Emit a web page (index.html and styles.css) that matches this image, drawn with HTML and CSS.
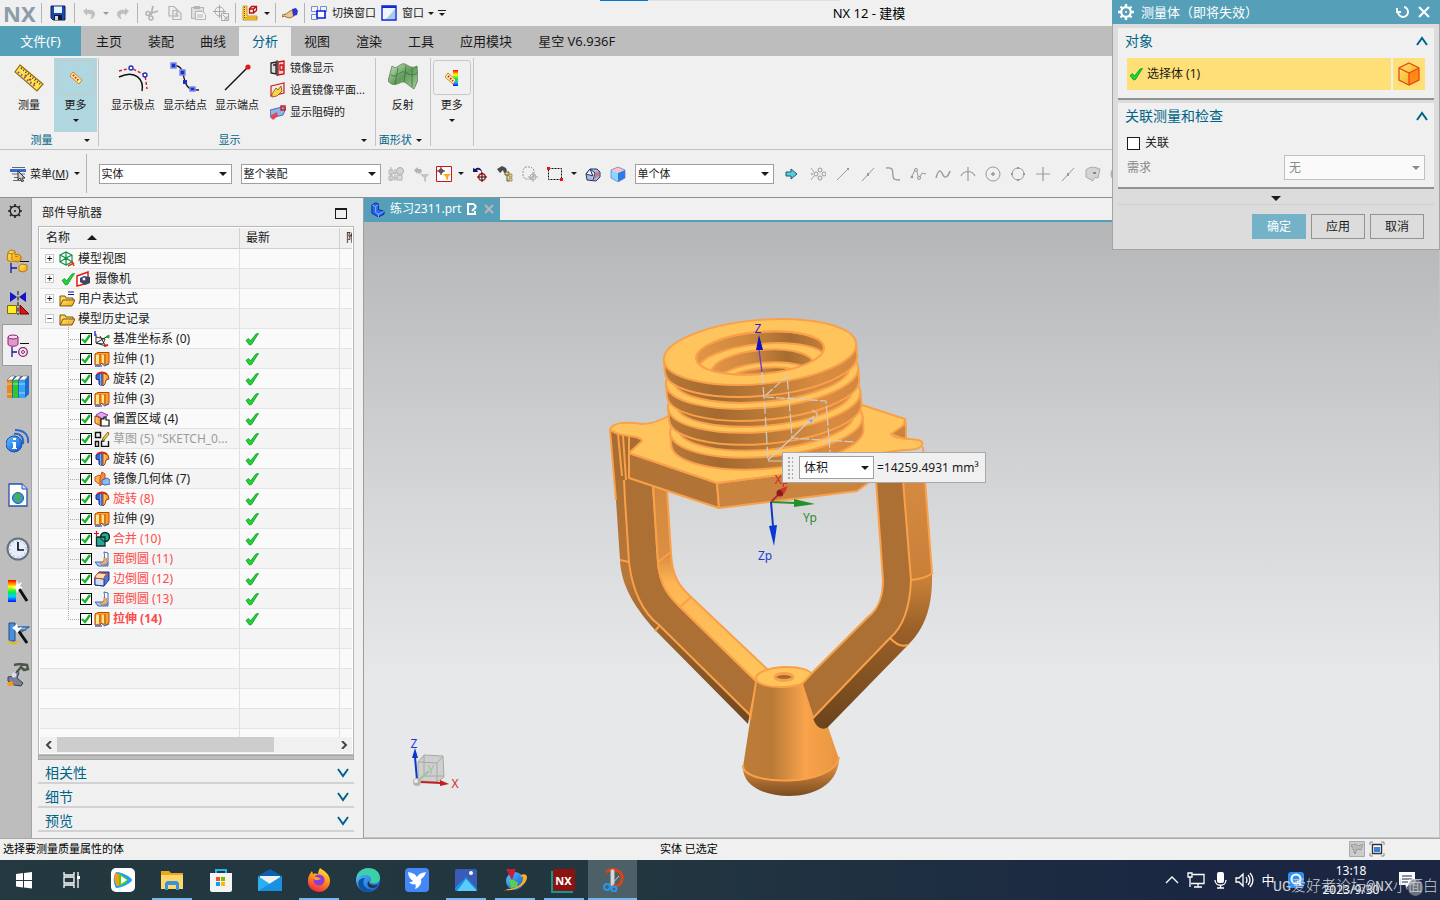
FILE: index.html
```html
<!DOCTYPE html>
<html lang="zh-CN">
<head>
    <meta charset="UTF-8">
    <meta name="viewport" content="width=device-width, initial-scale=1.0">
    <title>NX 12 - 建模</title>
    <link rel="stylesheet" href="styles.css">
</head>
<body>
    <!-- icon sprite -->
    <svg class="sprite" aria-hidden="true">
        <defs>
            <linearGradient id="gold" x1="0" y1="0" x2="1" y2="1"><stop offset="0" stop-color="#ffe96b"/><stop offset="1" stop-color="#f0a010"/></linearGradient>
            <linearGradient id="orange" x1="0" y1="0" x2="1" y2="0"><stop offset="0" stop-color="#ffe070"/><stop offset="1" stop-color="#ff7a10"/></linearGradient>
            <linearGradient id="blue" x1="0" y1="0" x2="1" y2="1"><stop offset="0" stop-color="#5ac8ff"/><stop offset="1" stop-color="#1050d0"/></linearGradient>
            <linearGradient id="green" x1="0" y1="0" x2="1" y2="1"><stop offset="0" stop-color="#cfe8c4"/><stop offset="0.5" stop-color="#5f9c58"/><stop offset="1" stop-color="#a9cfa0"/></linearGradient>
            <linearGradient id="rainbow" x1="0" y1="0" x2="0" y2="1"><stop offset="0" stop-color="#f00"/><stop offset="0.3" stop-color="#ff0"/><stop offset="0.55" stop-color="#0e4"/><stop offset="0.75" stop-color="#0cf"/><stop offset="1" stop-color="#11f"/></linearGradient>
            <linearGradient id="fire" x1="0.7" y1="0" x2="0.3" y2="1"><stop offset="0" stop-color="#ffe23a"/><stop offset="0.5" stop-color="#ff8a16"/><stop offset="1" stop-color="#f0204e"/></linearGradient>
        </defs>
        <symbol id="i-check" viewBox="0 0 14 14"><path d="M1 8.500 3.500 6.500 5.500 9 11 2 13.500 1.500 6.500 12.500 4.500 13Z" fill="#1fd43a" stroke="#0a9a1c" stroke-width=".8"/></symbol>
        <symbol id="i-save" viewBox="0 0 16 16"><path d="M1 1h14v14H3L1 13Z" fill="#1c49b0" stroke="#0c2060"/><path d="M4 1.500h8V8H4Z" fill="#e8f2ff"/><path d="M4 10h8v5H4Z" fill="#101830"/><path d="M5 11h3v4H5Z" fill="#d0d8e0"/></symbol>
        <symbol id="i-undo" viewBox="0 0 16 16"><path d="M2 6l4-3v2c5-1 8 1 8 4 0 3-3 5-5 5 2-2 3-6-3-5v2Z" fill="#c0c0c0"/></symbol>
        <symbol id="i-redo" viewBox="0 0 16 16"><path d="M14 6l-4-3v2C5 4 2 6 2 9c0 3 3 5 5 5-2-2-3-6 3-5v2Z" fill="#c0c0c0"/></symbol>
        <symbol id="i-cut" viewBox="0 0 16 16"><path d="M9 1 7 10M14 6 5 9" stroke="#b4b4b4" stroke-width="1.8"/><circle cx="4" cy="8.500" r="2" fill="none" stroke="#b4b4b4" stroke-width="1.500"/><circle cx="7" cy="13" r="2" fill="none" stroke="#b4b4b4" stroke-width="1.500"/></symbol>
        <symbol id="i-copy" viewBox="0 0 16 16"><path d="M2 1.500h5l3 3V11H2ZM6 5.500h5l3 3v6H6Z" fill="#eee" stroke="#b4b4b4" stroke-width="1.200"/><path d="M8 9h3M8 11h4" stroke="#b4b4b4"/></symbol>
        <symbol id="i-paste" viewBox="0 0 16 16"><path d="M1.500 2.500h12v11h-12Z" fill="#ddd" stroke="#b4b4b4"/><path d="M4 1h6v3H4Z" fill="#b4b4b4"/><path d="M5.500 6.500h7l3 3v5h-10Z" fill="#f4f4f4" stroke="#b4b4b4"/><path d="M7 10h6M7 12h6" stroke="#b4b4b4"/></symbol>
        <symbol id="i-target" viewBox="0 0 16 16"><circle cx="6.500" cy="6.500" r="4.500" fill="none" stroke="#a8a8a8"/><path d="M6.500 0v13M0 6.500h13" stroke="#a8a8a8"/><path d="M8.500 8.500h7v7h-7Z" fill="#f0f0f0" stroke="#a8a8a8"/><path d="M10 10l4 4M14 11v3h-3" stroke="#a8a8a8" fill="none"/></symbol>
        <symbol id="i-measure" viewBox="0 0 16 16"><path d="M1 1h4v10h10v4H1Z" fill="#ffe03a" stroke="#b08010" stroke-width=".8"/><path d="M2.500 2v11H15" stroke="#b0201c" stroke-dasharray="1 1" fill="none"/><path d="M7.500 4h4v4h-4ZM7.500 4l2-2.500h5v4L11.500 8M11.500 4l3-2.500" fill="none" stroke="#b81414" stroke-width="1.300"/></symbol>
        <symbol id="i-hand" viewBox="0 0 16 16"><path d="M0 10l4-1 4-3 5-1-1 6-4 2-4-1-1-1-3 1Z" fill="#eec98c" stroke="#8c5a20" stroke-width=".8"/><path d="M10 4l4-1 2 3-1 4-4 1Z" fill="#3038c8"/></symbol>
        <symbol id="i-windows" viewBox="0 0 16 16"><path d="M.5 1.500h6v5h-6ZM9.500 1.500h6v5h-6ZM.5 9.500h6v5h-6Z" fill="#eef4ff" stroke="#7a90b8"/><path d="M6 6h8v7H6Z" fill="#fff" stroke="#0a18f0" stroke-width="1.600"/></symbol>
        <symbol id="i-window" viewBox="0 0 16 16"><path d="M1 1h14v14H1Z" fill="#eef6fc" stroke="#1020d8" stroke-width="1.400"/><path d="M1 1h14v2H1Z" fill="#1028d8"/><path d="M14 4v10H5Z" fill="#a4cdec"/></symbol>
        <symbol id="i-ruler" viewBox="0 0 30 30"><path d="M6 3 29 22 23 29 1 10Z" fill="#ffe44c" stroke="#9a6a10" stroke-width="1.200"/><path d="M7 6 26 22" stroke="#334" stroke-width="2" stroke-dasharray="1 2"/><path d="M4 10 22 25" stroke="#4a58d0" stroke-width="2" stroke-dasharray="1.500 2.500"/><path d="M11 13l10 9" stroke="#e02818" stroke-width="2" stroke-dasharray="2 4"/></symbol>
        <symbol id="i-poles" viewBox="0 0 30 30"><path d="M1 15C18 7 26 18 24 29" fill="none" stroke="#111" stroke-width="1.400"/><path d="M1 9 13 6 27 13l2 14" fill="none" stroke="#cc1a2a" stroke-width="1.400" stroke-dasharray="3 2"/><circle cx="13" cy="6" r="2" fill="#fff" stroke="#1830b8" stroke-width="1.300"/><circle cx="27" cy="13" r="2" fill="#fff" stroke="#1830b8" stroke-width="1.300"/></symbol>
        <symbol id="i-knots" viewBox="0 0 30 30"><path d="M3 3c11 1 9 8 12 16 2 7 5 9 14 9" fill="none" stroke="#111" stroke-width="1.300"/><path d="M1 1h5v5H1ZM10 8h5v5h-5ZM20 25h5v4h-5Z" fill="#1830c8" stroke="#7c8ae8" stroke-width="1.500"/><path d="M13 18h4v4h-4Z" fill="#1830c8"/></symbol>
        <symbol id="i-ends" viewBox="0 0 30 30"><path d="M3 28 26 5" stroke="#111" stroke-width="1.500"/><circle cx="26" cy="5" r="2.600" fill="#e01818"/></symbol>
        <symbol id="i-mirror" viewBox="0 0 16 16"><path d="M1 3 6 2v12l-5-1ZM3 5h3" fill="#ddd" stroke="#222" stroke-width="1.300"/><path d="M8 2 14 1v13l-6 1Z" fill="#ffd0d0" stroke="#c01010" stroke-width="1.300"/><path d="M7 0v16" stroke="#222"/><path d="M10 5h3v5h-3Z" fill="none" stroke="#c01010" stroke-width="1.300"/></symbol>
        <symbol id="i-setmirror" viewBox="0 0 16 16"><path d="M1 4 14 1v10L1 14Z" fill="#f4e8e0" stroke="#c02020" stroke-width="1.200"/><path d="M2 12 6 6l2 2 3-4 1 5-5 5-5 1Z" fill="#ffd24a" stroke="#8a4a10" stroke-width=".8"/></symbol>
        <symbol id="i-obstacle" viewBox="0 0 16 16"><path d="M0 6 12 3l4 1-3 7-12 3Z" fill="#8fb4ea" stroke="#3a50a0" stroke-width=".8"/><path d="M0 12 7 8l1 4-5 4Z" fill="#e04858"/><path d="M11 2h4v4h-4Z" fill="none" stroke="#d01818" stroke-width="1.300"/></symbol>
        <symbol id="i-reflect" viewBox="0 0 30 26"><path d="M4 2c5 5 8-4 13-2 4 2 7 5 12 2l1 14-4 9C21 22 17 17 14 18 9 20 5 23 0 17Z" fill="url(#green)" stroke="#567c50" stroke-width=".8"/><path d="M3 11c6 4 9-5 14-3 4 3 8 4 12 1M10 4 7 20M18 2l-2 16M24 5l0 18" stroke="#3f6f3c" stroke-width=".8" fill="none"/></symbol>
        <symbol id="i-mini-ruler" viewBox="0 0 16 16"><path d="M5 2 14 10l-3 4L2 6Z" fill="#fff0a0" stroke="#c88a20"/><path d="m5 5 6 6" stroke="#d02020" stroke-width="2" stroke-dasharray="1.500 1.500"/></symbol>
        <symbol id="i-rainbow-ruler" viewBox="0 0 16 16"><path d="M9 0h5v16H9Z" fill="url(#rainbow)"/><path d="M4 3l8 7-3 4-8-7Z" fill="#fff2b0" stroke="#c88a20"/><path d="m4 6 5 5" stroke="#d02020" stroke-width="2" stroke-dasharray="1.500 1.500"/></symbol>
        <symbol id="i-menu" viewBox="0 0 16 16"><path d="M2 1.500h13M2 8h13M4 11.500h10M3 14.500h11" stroke="#666" stroke-width="1.200"/><path d="M0 3h16v3H0Z" fill="#3868d8"/><path d="M8 5v9l2-2 2 4 1.500-1-1.500-3h3Z" fill="#ccc" stroke="#222" stroke-width=".9"/></symbol>
        <symbol id="i-grayasm" viewBox="0 0 16 16"><path d="M1 4h4v4H1ZM1 10h4v4H1ZM7 3v12M5 7h4M5 12h4M3 1v14" fill="none" stroke="#b0b0b0"/><circle cx="12" cy="5" r="3.500" fill="#d4d4d4" stroke="#b0b0b0"/><path d="M9 9h5v5H9Z" fill="#ddd" stroke="#b0b0b0"/></symbol>
        <symbol id="i-grayfilter" viewBox="0 0 16 16"><path d="M1 4l4-3v2h3l1 3-3 2-2-2v2Z" fill="#b4b4b4"/><path d="M7 8h9l-3 4v4l-2-1v-3Z" fill="#c4c4c4"/></symbol>
        <symbol id="i-filter" viewBox="0 0 16 16"><path d="M.5.500h15v15H.5Z" fill="#fff" stroke="#d01020"/><circle cx="5" cy="5" r="2" fill="none" stroke="#a01818"/><path d="M5 1v8M1 5h8" stroke="#222"/><path d="M7 8h8l-3 3v3l-2-1v-2Z" fill="#ffae10"/></symbol>
        <symbol id="i-rotpt" viewBox="0 0 16 16"><path d="M1 6V2l2 1c4-3 7 0 7 4-1-3-3-4-5-3l1 2Z" fill="#15155e"/><circle cx="10" cy="11" r="3.300" fill="none" stroke="#d01818" stroke-width="1.400"/><path d="M10 6v10M5 11h10" stroke="#111"/></symbol>
        <symbol id="i-find" viewBox="0 0 16 16"><path d="M0 3 5 0l4 2 1 3-3 2-1-3-3 3Z" fill="#4a4a4a"/><path d="M8 6h4v3H8ZM10 9v6h2" fill="#ffe05a" stroke="#555"/><path d="M12 8h3v3h-3ZM12 12h3v3h-3Z" fill="#ffd23c" stroke="#777" stroke-width=".7"/></symbol>
        <symbol id="i-graysel" viewBox="0 0 16 16"><path d="M3 1h6l3 3v6l-3 3H3L1 10V4Z" fill="none" stroke="#999" stroke-dasharray="2 1"/><circle cx="11" cy="11" r="3" fill="none" stroke="#aaa"/><path d="M11 6v10M6 11h10" stroke="#aaa"/></symbol>
        <symbol id="i-rect" viewBox="0 0 16 16"><path d="M1.500 2.500h13v11h-13Z" fill="none" stroke="#111" stroke-dasharray="2 1"/><path d="M0 1h3v3H0ZM13 12h3v3h-3Z" fill="#e01818"/></symbol>
        <symbol id="i-box-red" viewBox="0 0 16 16"><path d="M1 8 5 3l7 0 3 3v5l-4 4-9-1Z" fill="#a8bcdc" stroke="#20386c"/><path d="M5 3l5 4-2 7M5 3 1 8l7 2Z" fill="#f0f4fc" stroke="#20386c"/><path d="M10 7l4-2v5l-5 3Z" fill="#e05050" opacity=".6"/></symbol>
        <symbol id="i-cube" viewBox="0 0 16 16"><path d="M1 4 8 1l7 3-7 3Z" fill="#ffc0c4"/><path d="M1 4l7 3v9l-7-4Z" fill="#8ed4ff"/><path d="M15 4 8 7v9l7-4Z" fill="#2c7ce8"/><path d="M1 4 8 1l7 3v8l-7 4-7-4Z" fill="none" stroke="#5a78c0" stroke-width=".7"/></symbol>
        <symbol id="i-go" viewBox="0 0 16 16"><path d="M3 6h5V3l6 5-6 5v-3H3Z" fill="#58cce0" stroke="#24586c"/></symbol>
        <symbol id="i-snap" viewBox="0 0 16 16"><path d="M1 2l3 4M1 14l3-4M1 7l2 1-2 1" fill="none" stroke="#aaa"/><circle cx="10" cy="4" r="2" fill="none" stroke="#999"/><circle cx="6" cy="8" r="2" fill="none" stroke="#999"/><circle cx="14" cy="8" r="2" fill="none" stroke="#999"/><circle cx="10" cy="12" r="2" fill="none" stroke="#999"/></symbol>
        <symbol id="i-line" viewBox="0 0 16 16"><path d="M2 14 14 2" stroke="#999"/><path d="M12 2h2v2h-2Z" fill="#999"/></symbol>
        <symbol id="i-mid" viewBox="0 0 16 16"><path d="M2 15 14 2" stroke="#999"/><path d="M7 7h2v3H7Z" fill="#999"/></symbol>
        <symbol id="i-curve" viewBox="0 0 16 16"><path d="M1 2c9-1 6 4 7 8 0 4 3 4 7 4" fill="none" stroke="#999" stroke-width="1.300"/></symbol>
        <symbol id="i-spline" viewBox="0 0 16 16"><path d="M1 12 6 2l3 11 3-6 4 1" fill="none" stroke="#999"/><circle cx="6" cy="4" r="1.500" fill="#eee" stroke="#999"/><circle cx="9" cy="12" r="1.500" fill="#eee" stroke="#999"/><circle cx="2" cy="11" r="1.300" fill="#999"/></symbol>
        <symbol id="i-wave" viewBox="0 0 16 16"><path d="M1 12C4 1 6 5 8 9s5 2 7-4" fill="none" stroke="#999" stroke-width="1.400"/></symbol>
        <symbol id="i-inter" viewBox="0 0 16 16"><path d="M8 1v14M1 10c3-6 11-6 14 0" fill="none" stroke="#999" stroke-width="1.200"/></symbol>
        <symbol id="i-center" viewBox="0 0 16 16"><circle cx="8" cy="8" r="7" fill="none" stroke="#999"/><path d="M6 8h4M8 6v4" stroke="#999" stroke-width="1.500"/></symbol>
        <symbol id="i-quad" viewBox="0 0 16 16"><circle cx="8" cy="8" r="6" fill="none" stroke="#999"/><path d="M7 1h2v2H7ZM7 13h2v2H7ZM1 7h2v2H1ZM13 7h2v2h-2Z" fill="#999"/></symbol>
        <symbol id="i-plus" viewBox="0 0 16 16"><path d="M8 1v14M1 8h14" stroke="#999" stroke-width="1.200"/></symbol>
        <symbol id="i-face" viewBox="0 0 16 16"><path d="M1 4c4-4 9-3 14-1l-2 9c-3-1-5 0-5 3l-7-4Z" fill="#d4d4d4" stroke="#aaa"/><path d="M8 6h3v2H8Z" fill="#888"/></symbol>
        <symbol id="i-gear" viewBox="0 0 16 16"><circle cx="8" cy="8" r="4.800" fill="none" stroke="currentColor" stroke-width="2.200"/><circle cx="8" cy="8" r="1" fill="currentColor"/><path d="M8 0v3M8 13v3M0 8h3M13 8h3M2.500 2.500l2 2M11.500 11.500l2 2M13.500 2.500l-2 2M4.500 11.500l-2 2" stroke="currentColor" stroke-width="2.400"/></symbol>
        <symbol id="i-thin-gear" viewBox="0 0 16 16"><circle cx="8" cy="8" r="4.800" fill="none" stroke="#222" stroke-width="1.400"/><circle cx="8" cy="8" r="1" fill="#222"/><path d="M8 1v2.500M8 12.500V15M1 8h2.500M12.500 8H15M3 3l1.500 1.500M11.500 11.500 13 13M13 3l-1.500 1.500M4.500 11.500 3 13" stroke="#222" stroke-width="1.600"/></symbol>
        <symbol id="i-assembly" viewBox="0 0 24 24"><path d="M2 3l3-2 4 1v4l3-1 3 2v4l-3 2-4-1-3 1-4-2Z" fill="url(#gold)" stroke="#b87808"/><path d="M2 4l4 1 3-2M6 5v6M9 8l3-1" fill="none" stroke="#b87808"/><path d="M14 12.500h9" stroke="#111"/><path d="M5 14v10M5 19h6" stroke="#1418a0" stroke-width="1.300"/><path d="M13 17l3-2 5 1v5l-3 2-5-1Z" fill="url(#gold)" stroke="#b87808"/></symbol>
        <symbol id="i-constraint" viewBox="0 0 24 24"><path d="M4 1l7 5-7 5ZM20 1l-7 5 7 5Z" fill="#1414c8"/><path d="M12 0v24" stroke="#111" stroke-dasharray="4 1.500"/><path d="M1.500 14.500h9v8h-9Z" fill="#ffee20" stroke="#7a6a10"/><path d="M14 14v9h9Z" fill="#e01010" stroke="#700"/></symbol>
        <symbol id="i-partnav" viewBox="0 0 24 24"><path d="M1 4v7c0 3 10 3 10 0V4" fill="#e498cc" stroke="#8c2070"/><ellipse cx="6" cy="4" rx="5" ry="2" fill="#fbd8f0" stroke="#8c2070"/><path d="M13 10.500h9" stroke="#111"/><path d="M5 14v10M5 19h5" stroke="#1418a0" stroke-width="1.300"/><circle cx="16" cy="19" r="4.300" fill="none" stroke="#8c2070" stroke-width="1.300"/><circle cx="16" cy="19" r="1.500" fill="none" stroke="#8c2070"/></symbol>
        <symbol id="i-books" viewBox="0 0 24 24"><path d="M1 5 5 1h18v18l-4 4H1Z" fill="#1c6cd0"/><path d="M1 5h5v18H1Z" fill="#e88820"/><path d="M7 5h5v18H7Z" fill="#30c828"/><path d="M13 5h6v18h-6Z" fill="#35a4f4"/><path d="M1 5l4-4h4L6 5ZM7 5l4-4h4l-3 4ZM13 5l4-4h5l-3 4Z" fill="#fff" stroke="#555" stroke-width=".5"/><path d="M1 9h5M7 9h5M13 9h6M13 18h6M1 19h5" stroke="#ffffff90"/></symbol>
        <symbol id="i-info" viewBox="0 0 24 24"><path d="M8 5c7-1 10 4 9 10M9 1c10 0 14 6 13 13" fill="none" stroke="#2c68c8" stroke-width="2"/><circle cx="8" cy="15" r="8" fill="url(#blue)" stroke="#1a4cb0"/><path d="M7 9h3v2H7ZM6 13h4v6h1v1H6v-1h1v-5H6Z" fill="#fff"/></symbol>
        <symbol id="i-web" viewBox="0 0 24 24"><path d="M3 1h13l5 5v17H3Z" fill="#fff" stroke="#2850b0" stroke-width="1.300"/><path d="M16 1v5h5" fill="#cfe0fa" stroke="#2850b0"/><circle cx="12" cy="15" r="5.500" fill="#3898d8" stroke="#1c6090"/><path d="M9 11l4-1 2 4-3 5-3-3Z" fill="#48b050"/></symbol>
        <symbol id="i-clock" viewBox="0 0 24 24"><circle cx="12" cy="12" r="10.500" fill="#e4eefc" stroke="#68707c" stroke-width="2"/><circle cx="12" cy="12" r="8" fill="none" stroke="#889" stroke-dasharray="1 3"/><path d="M12 5v8h6" fill="none" stroke="#111" stroke-width="1.700"/></symbol>
        <symbol id="i-rainbow" viewBox="0 0 24 24"><path d="M2 1h8v22H2Z" fill="url(#rainbow)"/><path d="M12 8 21 22" stroke="#111" stroke-width="3"/><path d="M11 1l1 4 4-2-2 4 3 2-4 1-2 4-1-4-4-1 4-2Z" fill="#fff"/></symbol>
        <symbol id="i-mold" viewBox="0 0 24 24"><path d="M3 2h6v18H3Z" fill="#4a90d8" stroke="#1c508c"/><path d="M10 6h13l-9 6M10 9h10" fill="none" stroke="#2c68b8" stroke-width="1.300"/><path d="m2 20 6 3 5-3" stroke="#e8b820" stroke-width="2" fill="none"/><path d="M12 9 21 22" stroke="#111" stroke-width="3"/><path d="m11 3 1 4 4-1-2 3-3 3-2-3-3-2Z" fill="#fff"/></symbol>
        <symbol id="i-robot" viewBox="0 0 24 24"><path d="M8 2l5-1 8 1 1 4-4 1-3-3-4 5" fill="none" stroke="#4c5848" stroke-width="2.500"/><path d="M2 14l6-1 3-5 2 2-2 5 6 5-2 3-7-1-6-4Z" fill="#7a8098" stroke="#3c4048"/><circle cx="8" cy="12" r="2.500" fill="#d8dce4"/><path d="M1 20l5-2 2 5H2Z" fill="#f49a20"/></symbol>
        <symbol id="i-views" viewBox="0 0 16 16"><path d="M1 4 7 1l6 3v7l-6 3-6-3ZM1 4l6 3 6-3M7 1v13M1 11l6-4 6 4" fill="none" stroke="#109048" stroke-width="1.200"/><path d="M9 15l6-3M13 10l2 5" stroke="#e03818" stroke-width="1.500"/></symbol>
        <symbol id="i-camera" viewBox="0 0 16 16"><path d="M1 5 12 1v11L1 15Z" fill="#fff" stroke="#e01c10" stroke-width="1.500"/><path d="M4 7l4-2 6 1v6l-5 2-5-3Z" fill="#454558"/><circle cx="8" cy="8" r="2" fill="#fff" stroke="#3038a8"/></symbol>
        <symbol id="i-folder" viewBox="0 0 16 16"><path d="M1 14V4h5l1 2h7v3" fill="#ffd85a" stroke="#7a5010"/><path d="M1 14l3-6h12l-3 6Z" fill="url(#gold)" stroke="#7a5010"/></symbol>
        <symbol id="i-folder-eq" viewBox="0 0 16 16"><path d="M1 15V5h5l1 2h7v3" fill="#ffd85a" stroke="#7a5010"/><path d="M1 15l3-6h12l-3 6Z" fill="url(#gold)" stroke="#7a5010"/><path d="M9 1h6M9 3.500h6" stroke="#15159c" stroke-width="1.200"/></symbol>
        <symbol id="i-csys" viewBox="0 0 16 16"><path d="M2 3v9l10 3M2 12l12-7M2 6l9 2-2 5-7-1M6 5l5 9" fill="none" stroke="#333"/><path d="M1 0v5" stroke="#1c1cd0" stroke-width="1.300"/><path d="m12 6 3-2v3Z" fill="#2c9c2c" stroke="#2c9c2c"/><path d="m10 15 4-1" stroke="#d02020" stroke-width="2"/></symbol>
        <symbol id="i-extrude" viewBox="0 0 16 16"><path d="M1 3 4 1.500h11V12l-3 2H9l-1-2-2 2H1Z" fill="#ffa030" stroke="#b04c08"/><path d="M2 4h3v9H2ZM8 4h2v8H8Z" fill="#ffe88c"/><path d="M6 3v10M11 3v10" stroke="#b04c08"/><path d="M1 15h7M10 15l5-2" stroke="#4068d8" stroke-width="1.300"/></symbol>
        <symbol id="i-revolve" viewBox="0 0 16 16"><path d="M2 4l5-2v13l-2-2V9L2 8Z" fill="#3468d8" stroke="#162c80"/><path d="M9 2l5 2 1 4-3 1-1 4-2 2Z" fill="url(#orange)" stroke="#a83c08"/><path d="M6 3h2v12H6Z" fill="#7aa4f4"/><path d="M8 2v13" stroke="#162c80"/><path d="M3 3c3-2 7-2 10 0" stroke="#d82818" fill="none" stroke-width="1.800"/></symbol>
        <symbol id="i-offset" viewBox="0 0 16 16"><path d="M1 5l6 2v8l-6-3Z" fill="url(#orange)" stroke="#a04010"/><path d="M2 4l5-3 7 3-5 4Z" fill="#e4a8f0" stroke="#8c44a0"/><path d="M7 8h3V6h2v3h3v6H7Z" fill="#fff" stroke="#111" stroke-width="1.200"/></symbol>
        <symbol id="i-sketch" viewBox="0 0 16 16"><path d="M1.500 1.500h5v5h-5ZM1.500 10.500h3v5h-3ZM7.500 10v5.500h7V10M7.500 10h3" fill="none" stroke="#111" stroke-width="1.400"/><path d="m9 7 5-6 1 2-5 6-2 1Z" fill="#ffe04a" stroke="#8a6010"/></symbol>
        <symbol id="i-mirrorgeo" viewBox="0 0 16 16"><path d="M1 6 5 4l3 3v5L5 13 1 10Z" fill="#ffb04a" stroke="#b86010"/><path d="m8 1 3 2v7l-5 5V7Z" fill="#ff8838" stroke="#b85010"/><path d="m8 9 5-2 3 2v4l-5 1-3-1Z" fill="#8cb8f4" stroke="#3868b8"/></symbol>
        <symbol id="i-unite" viewBox="0 0 16 16"><path d="M0 2.500h5M2.500 0v5" stroke="#e01010" stroke-width="1.200"/><circle cx="11" cy="6" r="4.500" fill="#28a890" stroke="#0c3030" stroke-width="1.300"/><path d="M2.500 6h8.500v9H2.500Z" fill="#28a890" stroke="#0c3030" stroke-width="1.300"/><circle cx="11" cy="6" r="4.500" fill="none" stroke="#0c3030"/></symbol>
        <symbol id="i-faceblend" viewBox="0 0 16 16"><path d="m1 11 3 4h10v-4H8Z" fill="#a8c8f4" stroke="#3c68b0"/><path d="M10 1l4 1v9l-2 3-4-1c3-3 3-7 2-12Z" fill="#fff" stroke="#3c68b0"/><path d="M10 6v3c0 2-2 3-4 3l2 2c4 0 5-3 5-6Z" fill="#f0b070" stroke="#c06828" stroke-width=".6"/></symbol>
        <symbol id="i-edgeblend" viewBox="0 0 16 16"><path d="M1 6 5 1h10v8l-5 6-9-1Z" fill="#4a78e0" stroke="#20307c"/><path d="m1 7 9 1v7l-9-1Z" fill="#cfe0fc" stroke="#20307c"/><path d="M1 7c1-4 3-5 5-5l8 1c-2 0-4 2-4 5Z" fill="#ffe0b0" stroke="#d84818"/></symbol>
        <symbol id="i-part" viewBox="0 0 16 16"><path d="m2 3 4-2 3 1v6l6 2v3l-6 3-7-4Z" fill="#2868e8" stroke="#0a2490"/><path d="m2 3 4 2v6l3 2v3M6 5l3-2M9 13l6-3" fill="none" stroke="#9cc4ff" stroke-width=".8"/></symbol>
        <symbol id="i-solid" viewBox="0 0 24 24"><path d="M12 1 22 6v12l-10 5L2 18V6Z" fill="url(#gold)"/><path d="M12 11 22 6v12l-10 5Z" fill="#ff8a14"/><path d="M12 1 22 6v12l-10 5L2 18V6ZM2 6l10 5 10-5M12 11v12" fill="none" stroke="#e8461c" stroke-width="1.300"/></symbol>
    </svg>

    <header class="title-bar">
        <div class="quick-access">
            <strong class="logo">NX</strong>
            <span class="sep"></span>
            <button class="tool wide" aria-label="保存"><svg><use href="#i-save"/></svg></button>
            <span class="sep"></span>
            <button class="tool" aria-label="撤消"><svg><use href="#i-undo"/></svg></button>
            <i class="caret dim"></i>
            <button class="tool" aria-label="重做"><svg><use href="#i-redo"/></svg></button>
            <span class="sep"></span>
            <button class="tool" aria-label="剪切"><svg><use href="#i-cut"/></svg></button>
            <button class="tool" aria-label="复制"><svg><use href="#i-copy"/></svg></button>
            <button class="tool" aria-label="粘贴"><svg><use href="#i-paste"/></svg></button>
            <button class="tool" aria-label="重复命令"><svg><use href="#i-target"/></svg></button>
            <span class="sep"></span>
            <button class="tool" aria-label="测量"><svg><use href="#i-measure"/></svg></button>
            <i class="caret"></i>
            <span class="sep"></span>
            <button class="tool" aria-label="触控模式"><svg><use href="#i-hand"/></svg></button>
            <span class="sep"></span>
            <button class="tool with-text"><svg><use href="#i-windows"/></svg>切换窗口</button>
            <button class="tool with-text"><svg><use href="#i-window"/></svg>窗口</button>
            <i class="caret"></i>
            <i class="caret overflow"></i>
        </div>
        <h1 class="app-title">NX 12 - 建模</h1>
        <span class="load-strip"></span>
    </header>

    <nav class="ribbon-tabs">
        <a class="file-tab" href="#file">文件(F)</a>
        <a href="#home">主页</a>
        <a href="#assembly">装配</a>
        <a href="#curve">曲线</a>
        <a class="active" href="#analysis">分析</a>
        <a href="#view">视图</a>
        <a href="#render">渲染</a>
        <a href="#tools">工具</a>
        <a href="#app">应用模块</a>
        <a href="#starry">星空 V6.936F</a>
    </nav>

    <div class="ribbon">
        <section class="ribbon-group">
            <div class="ribbon-items first">
                <button class="big"><svg><use href="#i-ruler"/></svg>测量</button>
                <button class="more selected"><span class="more-box"><svg><use href="#i-mini-ruler"/></svg></span>更多<i class="caret"></i></button>
            </div>
            <footer><span>测量</span><i class="caret"></i></footer>
        </section>
        <section class="ribbon-group">
            <div class="ribbon-items display">
                <button class="big"><svg><use href="#i-poles"/></svg>显示极点</button>
                <button class="big"><svg><use href="#i-knots"/></svg>显示结点</button>
                <button class="big"><svg><use href="#i-ends"/></svg>显示端点</button>
                <div class="small-items">
                    <button><svg><use href="#i-mirror"/></svg>镜像显示</button>
                    <button><svg><use href="#i-setmirror"/></svg>设置镜像平面...</button>
                    <button><svg><use href="#i-obstacle"/></svg>显示阻碍的</button>
                </div>
            </div>
            <footer><span>显示</span><i class="caret"></i></footer>
        </section>
        <section class="ribbon-group">
            <div class="ribbon-items">
                <button class="big"><svg><use href="#i-reflect"/></svg>反射</button>
            </div>
            <footer><span>面形状</span><i class="caret"></i></footer>
        </section>
        <section class="ribbon-group">
            <div class="ribbon-items">
                <button class="more"><span class="more-box"><svg><use href="#i-rainbow-ruler"/></svg></span>更多<i class="caret"></i></button>
            </div>
        </section>
    </div>

    <div class="selection-bar">
        <button class="menu-button"><svg><use href="#i-menu"/></svg><span>菜单(<u>M</u>)</span><i class="caret"></i></button>
        <span class="sep"></span>
        <span class="combo type-filter"><select aria-label="类型过滤器"><option>实体</option></select></span>
        <span class="combo scope"><select aria-label="选择范围"><option>整个装配</option></select></span>
        <button class="tool" aria-label="装配"><svg><use href="#i-grayasm"/></svg></button>
        <button class="tool" aria-label="重置过滤器"><svg><use href="#i-grayfilter"/></svg></button>
        <button class="tool narrow" aria-label="过滤器"><svg><use href="#i-filter"/></svg></button>
        <i class="caret"></i>
        <button class="tool" aria-label="旋转点"><svg><use href="#i-rotpt"/></svg></button>
        <button class="tool" aria-label="查找"><svg><use href="#i-find"/></svg></button>
        <button class="tool" aria-label="选择"><svg><use href="#i-graysel"/></svg></button>
        <button class="tool" aria-label="矩形"><svg><use href="#i-rect"/></svg></button>
        <i class="caret"></i>
        <button class="tool" aria-label="线框"><svg><use href="#i-box-red"/></svg></button>
        <button class="tool" aria-label="着色"><svg><use href="#i-cube"/></svg></button>
        <span class="combo body-rule"><select aria-label="体规则"><option>单个体</option></select></span>
        <button class="tool wide" aria-label="继续"><svg><use href="#i-go"/></svg></button>
        <button class="tool" aria-label="捕捉点"><svg><use href="#i-snap"/></svg></button>
        <button class="tool" aria-label="端点"><svg><use href="#i-line"/></svg></button>
        <button class="tool" aria-label="中点"><svg><use href="#i-mid"/></svg></button>
        <button class="tool" aria-label="控制点"><svg><use href="#i-curve"/></svg></button>
        <button class="tool" aria-label="极点"><svg><use href="#i-spline"/></svg></button>
        <button class="tool" aria-label="样条"><svg><use href="#i-wave"/></svg></button>
        <button class="tool" aria-label="交点"><svg><use href="#i-inter"/></svg></button>
        <button class="tool" aria-label="圆心"><svg><use href="#i-center"/></svg></button>
        <button class="tool" aria-label="象限点"><svg><use href="#i-quad"/></svg></button>
        <button class="tool" aria-label="现有点"><svg><use href="#i-plus"/></svg></button>
        <button class="tool" aria-label="曲线上的点"><svg><use href="#i-mid"/></svg></button>
        <button class="tool" aria-label="面上的点"><svg><use href="#i-face"/></svg></button>
        <button class="tool" aria-label="更多点"><svg><use href="#i-center"/></svg></button>
    </div>

    <main class="workspace">
        <div class="resource-bar">
            <button class="settings" aria-label="设置"><svg><use href="#i-thin-gear"/></svg></button>
            <button aria-label="装配导航器"><svg><use href="#i-assembly"/></svg></button>
            <button aria-label="约束导航器"><svg><use href="#i-constraint"/></svg></button>
            <button class="active" aria-label="部件导航器"><svg><use href="#i-partnav"/></svg></button>
            <button aria-label="重用库"><svg><use href="#i-books"/></svg></button>
            <button class="spaced" aria-label="HD3D"><svg><use href="#i-info"/></svg></button>
            <button class="spaced" aria-label="浏览器"><svg><use href="#i-web"/></svg></button>
            <button class="spaced" aria-label="历史记录"><svg><use href="#i-clock"/></svg></button>
            <button aria-label="系统材料"><svg><use href="#i-rainbow"/></svg></button>
            <button aria-label="加工向导"><svg><use href="#i-mold"/></svg></button>
            <button aria-label="角色"><svg><use href="#i-robot"/></svg></button>
        </div>

        <aside class="navigator">
            <div class="navigator-title"><h2>部件导航器</h2><button class="maximize" aria-label="最大化"></button></div>
            <div class="tree-box">
                <div class="tree-scroll">
                    <table class="tree">
                        <colgroup><col class="col-name"><col class="col-latest"><col></colgroup>
                        <thead>
                            <tr><th>名称 <i class="sort"></i></th><th>最新</th><th>附加</th></tr>
                        </thead>
                        <tbody>
                            <tr><td><div class="node"><button class="toggle" aria-label="展开">+</button><svg><use href="#i-views"/></svg>模型视图</div></td><td></td><td></td></tr>
                            <tr><td><div class="node"><button class="toggle" aria-label="展开">+</button><svg class="check"><use href="#i-check"/></svg><svg><use href="#i-camera"/></svg>摄像机</div></td><td></td><td></td></tr>
                            <tr><td><div class="node"><button class="toggle" aria-label="展开">+</button><svg><use href="#i-folder-eq"/></svg>用户表达式</div></td><td></td><td></td></tr>
                            <tr><td><div class="node"><button class="toggle" aria-label="折叠">−</button><svg><use href="#i-folder"/></svg>模型历史记录</div></td><td></td><td></td></tr>
                            <tr><td><label class="leaf"><input type="checkbox" checked><svg><use href="#i-csys"/></svg>基准坐标系 (0)</label></td><td><svg class="check"><use href="#i-check"/></svg></td><td></td></tr>
                            <tr><td><label class="leaf"><input type="checkbox" checked><svg><use href="#i-extrude"/></svg>拉伸 (1)</label></td><td><svg class="check"><use href="#i-check"/></svg></td><td></td></tr>
                            <tr><td><label class="leaf"><input type="checkbox" checked><svg><use href="#i-revolve"/></svg>旋转 (2)</label></td><td><svg class="check"><use href="#i-check"/></svg></td><td></td></tr>
                            <tr><td><label class="leaf"><input type="checkbox" checked><svg><use href="#i-extrude"/></svg>拉伸 (3)</label></td><td><svg class="check"><use href="#i-check"/></svg></td><td></td></tr>
                            <tr><td><label class="leaf"><input type="checkbox" checked><svg><use href="#i-offset"/></svg>偏置区域 (4)</label></td><td><svg class="check"><use href="#i-check"/></svg></td><td></td></tr>
                            <tr><td><label class="leaf muted"><input type="checkbox" checked><svg><use href="#i-sketch"/></svg>草图 (5) "SKETCH_0...</label></td><td><svg class="check"><use href="#i-check"/></svg></td><td></td></tr>
                            <tr><td><label class="leaf"><input type="checkbox" checked><svg><use href="#i-revolve"/></svg>旋转 (6)</label></td><td><svg class="check"><use href="#i-check"/></svg></td><td></td></tr>
                            <tr><td><label class="leaf"><input type="checkbox" checked><svg><use href="#i-mirrorgeo"/></svg>镜像几何体 (7)</label></td><td><svg class="check"><use href="#i-check"/></svg></td><td></td></tr>
                            <tr><td><label class="leaf red"><input type="checkbox" checked><svg><use href="#i-revolve"/></svg>旋转 (8)</label></td><td><svg class="check"><use href="#i-check"/></svg></td><td></td></tr>
                            <tr><td><label class="leaf"><input type="checkbox" checked><svg><use href="#i-extrude"/></svg>拉伸 (9)</label></td><td><svg class="check"><use href="#i-check"/></svg></td><td></td></tr>
                            <tr><td><label class="leaf red"><input type="checkbox" checked><svg><use href="#i-unite"/></svg>合并 (10)</label></td><td><svg class="check"><use href="#i-check"/></svg></td><td></td></tr>
                            <tr><td><label class="leaf red"><input type="checkbox" checked><svg><use href="#i-faceblend"/></svg>面倒圆 (11)</label></td><td><svg class="check"><use href="#i-check"/></svg></td><td></td></tr>
                            <tr><td><label class="leaf red"><input type="checkbox" checked><svg><use href="#i-edgeblend"/></svg>边倒圆 (12)</label></td><td><svg class="check"><use href="#i-check"/></svg></td><td></td></tr>
                            <tr><td><label class="leaf red"><input type="checkbox" checked><svg><use href="#i-faceblend"/></svg>面倒圆 (13)</label></td><td><svg class="check"><use href="#i-check"/></svg></td><td></td></tr>
                            <tr><td><label class="leaf red current"><input type="checkbox" checked><svg><use href="#i-extrude"/></svg>拉伸 (14)</label></td><td><svg class="check"><use href="#i-check"/></svg></td><td></td></tr>
                            <tr><td></td><td></td><td></td></tr>
                            <tr><td></td><td></td><td></td></tr>
                            <tr><td></td><td></td><td></td></tr>
                            <tr><td></td><td></td><td></td></tr>
                            <tr><td></td><td></td><td></td></tr>
                            <tr><td></td><td></td><td></td></tr>
                        </tbody>
                    </table>
                </div>
                <div class="scrollbar">
                    <button aria-label="向左滚动"><svg viewBox="0 0 8 8"><path d="M6 0 2 4l4 4"/></svg></button>
                    <span class="track"><span class="thumb"></span></span>
                    <button aria-label="向右滚动"><svg viewBox="0 0 8 8"><path d="m2 0 4 4-4 4"/></svg></button>
                </div>
            </div>
            <div class="splitter"></div>
            <button class="fold">相关性<svg viewBox="0 0 12 10"><path d="m1 1 5 7 5-7"/></svg></button>
            <button class="fold">细节<svg viewBox="0 0 12 10"><path d="m1 1 5 7 5-7"/></svg></button>
            <button class="fold">预览<svg viewBox="0 0 12 10"><path d="m1 1 5 7 5-7"/></svg></button>
        </aside>

        <section class="graphics">
            <div class="part-tabs">
                <a class="part-tab" href="#part"><svg><use href="#i-part"/></svg><span>练习2311.prt</span><svg class="modified" viewBox="0 0 12 12"><path d="M8 1H2v10h7V8M8 1l2 3"/><path d="M10 4 6 8"/></svg><svg class="close" viewBox="0 0 12 12"><path d="m2 2 8 8M10 2l-8 8"/></svg></a>
            </div>
            <div class="viewport">
                <svg class="model" viewBox="364 222 1075 615" role="img" aria-label="实体模型">
                    <defs>
                        <linearGradient id="wall" x1="0" x2="1"><stop offset="0" stop-color="#b77838"/><stop offset=".25" stop-color="#a56a30"/><stop offset=".55" stop-color="#bf7d38"/><stop offset=".8" stop-color="#d98c40"/><stop offset="1" stop-color="#d48840"/></linearGradient>
                        <linearGradient id="bore" x1="0" x2="1"><stop offset="0" stop-color="#e29545"/><stop offset=".4" stop-color="#cf8740"/><stop offset=".75" stop-color="#a66c30"/><stop offset="1" stop-color="#c27e3a"/></linearGradient>
                        <linearGradient id="cone" x1="0" x2="1"><stop offset="0" stop-color="#bd7c38"/><stop offset=".3" stop-color="#b97a38"/><stop offset=".65" stop-color="#f9a34c"/><stop offset="1" stop-color="#e6963f"/></linearGradient>
                        <linearGradient id="base" x1="0" y1="0" x2="0" y2="1"><stop offset=".2" stop-color="#d98b40"/><stop offset="1" stop-color="#7a4c20"/></linearGradient>
                        <linearGradient id="outer" gradientUnits="userSpaceOnUse" x1="0" y1="480" x2="0" y2="730"><stop offset="0" stop-color="#d58a40"/><stop offset=".4" stop-color="#c88039"/><stop offset=".6" stop-color="#9a6028"/><stop offset="1" stop-color="#6a431c"/></linearGradient>
                        <linearGradient id="inner" gradientUnits="userSpaceOnUse" x1="0" y1="480" x2="0" y2="670"><stop offset="0" stop-color="#d28840"/><stop offset=".4" stop-color="#dc8f42"/><stop offset=".55" stop-color="#ffb654"/><stop offset="1" stop-color="#ffc45c"/></linearGradient>
                        <linearGradient id="left-outer" gradientUnits="userSpaceOnUse" x1="0" y1="430" x2="0" y2="724"><stop offset="0" stop-color="#a66b30"/><stop offset=".5" stop-color="#b87838"/><stop offset="1" stop-color="#6f461e"/></linearGradient>
                        <clipPath id="bore-clip"><ellipse cx="760" cy="353" rx="64" ry="21"/></clipPath>
                        <path id="disk-side" d="M663.500 352v12a96.500 32 0 0 0 193 0v-12Z"/>
                        <path id="neck-side" d="M672 360v14a88 28 0 0 0 176 0v-14Z"/>
                    </defs>
                    <g stroke="#f9a04a" stroke-width="2" stroke-linejoin="round">
                        <!-- left arm -->
                        <path fill="url(#left-outer)" stroke="none" d="M610 430 616 500 620 560C621 587 637 610 655 630L748 724 752 700 670 600 640 440Z"/>
                        <path fill="#ad7034" d="M622 440 625 500 629 562C632 590 643 613 659 625L750 715 757 682 680 607C670 597 660 587 658 563L652 470Z"/>
                        <path fill="url(#inner)" d="M652 470 658 563C660 587 670 597 680 607L757 682 768 670 691 597C680 587 672 577 671 553L666 475Z"/>
                        <path fill="none" d="M620 560 629 562M655 631 660 625M658 562 671 552M680 607 691 597"/>
                        <!-- hex plate -->
                        <path fill="#a96d32" stroke="none" d="M610 430 636 435 643 440 629 453V480H614Z"/>
                        <path fill="#b17436" d="M629 453 717 483 719 508 629 478Z"/>
                        <path fill="#c98540" d="M717 483 873 463 868 483 857 491 719 508Z"/>
                        <path fill="#c98540" d="M905 419 891 434 906 440V428Z"/>
                        <path fill="#ffc45c" d="M610 430C612 421 630 422 642 424 655 424 664 419 672 414L862 405 905 419 904 425 891 434C896 440 910 438 918 440 925 442 923 447 916 449 890 452 878 450 873 463L717 483 629 453 642 441C641 436 630 437 618 434Z"/>
                        <path fill="none" d="M610 430 616 500M618 434 622 476M623 436 626 480M629 436V453"/>
                        <!-- threads -->
                        <g transform="rotate(-5 760 352)">
                            <use href="#disk-side" y="73" fill="url(#wall)"/>
                            <ellipse cx="760" cy="425" rx="96.500" ry="32" fill="#ffc45c"/>
                            <use href="#neck-side" y="48" fill="url(#wall)"/>
                            <use href="#disk-side" y="48" fill="url(#wall)"/>
                            <ellipse cx="760" cy="400" rx="96.500" ry="32" fill="#ffc45c"/>
                            <use href="#neck-side" y="24" fill="url(#wall)"/>
                            <use href="#disk-side" y="24" fill="url(#wall)"/>
                            <ellipse cx="760" cy="376" rx="96.500" ry="32" fill="#ffc45c"/>
                            <use href="#neck-side" fill="url(#wall)"/>
                            <use href="#disk-side" fill="url(#wall)"/>
                            <ellipse cx="760" cy="352" rx="96.500" ry="32" fill="#ffc45c"/>
                            <ellipse cx="760" cy="353" rx="64" ry="21" fill="url(#bore)"/>
                            <g clip-path="url(#bore-clip)">
                                <ellipse cx="761" cy="364" rx="64" ry="20" fill="#ffc45c"/>
                                <ellipse cx="761" cy="368" rx="51" ry="18" fill="url(#bore)"/>
                                <ellipse cx="762" cy="379" rx="48" ry="16" fill="#ffc45c"/>
                                <ellipse cx="762" cy="382" rx="42" ry="14" fill="url(#bore)"/>
                            </g>
                            <ellipse cx="760" cy="353" rx="64" ry="21" fill="none"/>
                        </g>
                        <!-- cone foot -->
                        <path fill="url(#base)" stroke="none" d="M743 766C742 787 766 796 789 796 816 796 838 783 839 759Z"/>
                        <path fill="url(#cone)" d="M756 682 743 767C755 786 827 786 839 759L828 727 803 683Z" stroke="none"/>
                        <path fill="none" d="M756 682 750 720M743 765C741 786 834 788 839 757"/>
                        <ellipse cx="784" cy="677" rx="28" ry="10" fill="#ffc45c" transform="rotate(-3 784 677)"/>
                        <ellipse cx="784" cy="677" rx="9" ry="3.500" fill="#a56a30" stroke-width="3"/>
                        <!-- right arm -->
                        <path fill="url(#outer)" stroke="none" d="M903 480 911 580C910 607 903 627 890 638L813 718C816 728 823 731 828 727L908 645C923 630 933 610 932 573L925 480Z"/>
                        <path fill="#ad7034" d="M876 480 883 580C883 600 877 610 868 617L812 673 802 684 813 718 890 638C903 627 910 607 911 580L903 480Z"/>
                        <path fill="none" d="M925 480 932 573M911 580Q924 579 933 573M890 638Q899 648 908 645M923 447 925 483"/>
                    </g>
                    <g fill="none" stroke="#d0cdcb" stroke-width="1.200">
                        <path d="M762 372 765 410 768 460" stroke-dasharray="12 3"/>
                        <path d="M765 397 826 401 830 452M766 395 787 376 789 398 792 438 855 442" stroke-dasharray="9 2"/>
                        <path d="M768 460 792 438 814 416M768 461H782M812 410l5 3v5"/>
                        <path d="m807 421 6-3v5Z" fill="#999"/>
                    </g>
                    <path d="M759 350 762 372" stroke="#6d3cc8" stroke-width="1.400"/>
                    <path d="m759 335-3 15h7Z" fill="#1210c0"/>
                    <g stroke-width="2">
                        <path d="M771 502 780 493" stroke="#c02828"/><circle cx="780" cy="493" r="3.500" fill="#8c1c1c"/><path d="m780 489 8-3-4 8Z" fill="#d83030"/>
                        <path d="M771 502 795 503" stroke="#2a9030"/><path d="m794 499 21 5-21 3Z" fill="#249028"/>
                        <path d="M771 502 773 526" stroke="#1038c8"/><path d="m769 526 8-1-3 21Z" fill="#0838d8"/>
                    </g>
                    <!-- view triad -->
                    <path d="m418 762 6-7 19 1 1 21-7 5-19-1Z" fill="#cfcfcf" stroke="#a8a8a8"/>
                    <path d="M418 762 437 763 437 782M437 763 443 756M424 755V776L418 781M424 776H444" fill="none" stroke="#a8a8a8"/>
                    <path d="m420 779 9-8" stroke="#9cc49c" stroke-width="2"/>
                    <path d="M417 780 415 757" stroke="#1038c8" stroke-width="2"/><path d="m415 748-3 10h6Z" fill="#1038c8"/>
                    <path d="M420 782 441 783" stroke="#c02020" stroke-width="2"/><path d="m440 780 9 4-9 2Z" fill="#c02020"/>
                    <circle cx="417" cy="782" r="4" fill="#b4b4b4"/><circle cx="416" cy="781" r="2" fill="#eee"/>
                    <g class="axis-labels">
                        <text x="758" y="333" fill="#2a20d8">Z</text>
                        <text x="782" y="484" fill="#d02828">Xp</text>
                        <text x="810" y="522" fill="#2c8c34">Yp</text>
                        <text x="765" y="560" fill="#1a40d0">Zp</text>
                        <text x="414" y="748" fill="#2038d8">Z</text>
                        <text x="431" y="774" fill="#9cc49c">Y</text>
                        <text x="455" y="788" fill="#d03030">X</text>
                    </g>
                </svg>
                <div class="measure-readout">
                    <span class="grip"></span>
                    <span class="combo"><select aria-label="测量类型"><option>体积</option></select></span>
                    <output>=14259.4931 mm³</output>
                </div>
            </div>
        </section>
    </main>

    <div class="status-bar">
        <span class="cue">选择要测量质量属性的体</span>
        <span class="status">实体 已选定</span>
        <svg viewBox="0 0 16 16"><path d="M.5.500h15v15H.5Z" fill="#ccc" stroke="#aaa"/><path d="m2 4 5-1 2 2 5-2-2 6-4-1-2 5-2-5Z" fill="#bbb" stroke="#888" stroke-dasharray="2 1"/></svg>
        <svg viewBox="0 0 16 16"><path d="M1 4V1h3M12 1h3v3M15 12v3h-3M4 15H1v-3" fill="none" stroke="#888"/><path d="M3.500 3.500h9v9h-9Z" fill="#fff" stroke="#333" stroke-width="1.400"/><path d="M5 6h6v5H5Z" fill="#3c80d8"/></svg>
    </div>

    <footer class="taskbar">
        <button aria-label="开始"><svg viewBox="0 0 24 24"><path d="m4 6 7-1v7H4ZM12 5l8-1v8h-8ZM4 13h7v6.500L4 18.500ZM12 13h8v7.500l-8-1Z" fill="#fff"/></svg></button>
        <button aria-label="任务视图"><svg viewBox="0 0 24 24"><path d="M4 4v3h10V4M4 20v-3h10v3M4 9h10v6H4ZM18 4v16" fill="none" stroke="#fff" stroke-width="1.300"/><path d="M17 8h3v3h-3Z" fill="#fff"/></svg></button>
        <button class="app" aria-label="视频"><svg viewBox="0 0 24 24"><rect width="24" height="24" rx="5" fill="#fff"/><path d="M5 4c7 0 16 6 16 8s-9 8-16 8c-3-5-3-11 0-16Z" fill="#1e9cff"/><path d="M4 5c5 1 10 4 12 7-2 3-7 6-10 6-3-4-3-9-2-13Z" fill="#ff9a10"/><path d="M8 6c6 3 9 5 9 6s-4 5-9 6Z" fill="#4cd010"/><path d="m10 8 6 4-6 4Z" fill="#fff"/></svg></button>
        <button class="app open" aria-label="文件资源管理器"><svg viewBox="0 0 24 24"><path d="M1 3h8l2 2h12v16H1Z" fill="#e8a820"/><path d="M1 7h22v14H1Z" fill="#ffd668"/><path d="M5 22v-7l2-2h10l2 2v7h-3v-5H8v5Z" fill="#3a94dc"/></svg></button>
        <button class="app" aria-label="应用商店"><svg viewBox="0 0 24 24"><path d="M7 6V2h10v4" fill="none" stroke="#28b4ec" stroke-width="2"/><path d="M1 5h22v17q0 2-2 2H3q-2 0-2-2Z" fill="#f4f4f4"/><path d="M7 9h4v4H7Z" fill="#f05022"/><path d="M12 9h4v4h-4Z" fill="#7fba00"/><path d="M7 14h4v4H7Z" fill="#00a4ef"/><path d="M12 14h4v4h-4Z" fill="#ffb900"/></svg></button>
        <button class="app" aria-label="邮件"><svg viewBox="0 0 24 24"><path d="m0 8 12-7 12 7v14H0Z" fill="#0c60b0"/><path d="M2 8h20v9H2Z" fill="#f0f0f0"/><path d="m0 8 12 8 12-8v15H0Z" fill="#2ab0f0"/><path d="m0 23 24-15v15Z" fill="#1a90e0"/></svg></button>
        <button class="app open" aria-label="Firefox"><svg viewBox="0 0 24 24"><path d="M13 0c4 3 10 6 10 13 0 6-5 11-11 11S0 19 1 12c0-4 2-6 4-9l1 3c3-1 4 0 5 0 0-2 1-4 2-6Z" fill="url(#fire)"/><circle cx="12" cy="12" r="5.500" fill="#8a3ce0"/><path d="M5 9c5-1 7 1 9 2-2 1-5 2-7 0Z" fill="#ff9c28"/></svg></button>
        <button class="app" aria-label="Edge"><svg viewBox="0 0 24 24"><circle cx="12" cy="12" r="12" fill="url(#blue)"/><path d="M1 8C5-3 24-2 24 10c0 7-9 6-10 4 3-3 0-7-5-7-4 0-7 1-8 5Z" fill="#3cd0a8"/><path d="M9 10c-4 5 0 13 9 12-5 3-12 2-15-3-2-5 0-9 6-9Z" fill="#0c54a0"/><path d="M13 13c-1 4 5 5 9 4-2 3-6 4-9 2-2-2-2-5 0-6Z" fill="#203840"/></svg></button>
        <button class="app" aria-label="飞鸟"><svg viewBox="0 0 24 24"><rect width="24" height="24" rx="4" fill="#4488f8"/><path d="M3 4c5 1 7 2 9 5 2-3 4-4 9-5-1 3-2 5-5 7 1 4-1 8-6 10 1-2 1-4 0-5-2 1-4 0-6-2 2 0 3 0 4-1-3-2-5-5-5-9Z" fill="#fff"/></svg></button>
        <button class="app open" aria-label="照片"><svg viewBox="0 0 24 24"><rect x="1" y="1" width="22" height="22" rx="2" fill="#3a5cb8"/><path d="M1 20 12 9l11 12q0 2-2 2H3q-2 0-2-2Z" fill="#1a90e0"/><path d="m3 23 9-12 11 12Z" fill="#5ccafc"/><circle cx="17" cy="5" r="2" fill="#fff"/></svg></button>
        <button class="app open" aria-label="浏览器"><svg viewBox="0 0 24 24"><circle cx="12" cy="13" r="9" fill="url(#blue)"/><path d="M6 12c5-2 6 3 9 2l-1 5-6 1Z" fill="#58d050"/><path d="m3 1 10 0-4 11Z" fill="#c81c38"/><path d="M0 22c5 0 4-1 4-1 9 0 17-5 16-12l-3-1c3-3 7-2 7 1 0 8-12 15-24 13Z" fill="#ffb020"/></svg></button>
        <button class="app open" aria-label="NX"><span class="nx-icon">NX</span></button>
        <button class="app open current" aria-label="截图"><svg viewBox="0 0 24 24"><path d="M5 4c8-6 17 0 16 7-1 6-5 8-10 7" fill="none" stroke="#d84418" stroke-width="3"/><path d="M10 2h3v14l-3 2ZM18 8l-8 9" fill="#ddd" stroke="#ccc"/><circle cx="6" cy="19" r="3" fill="none" stroke="#2898e8" stroke-width="2"/><circle cx="13" cy="21" r="2.500" fill="none" stroke="#2898e8" stroke-width="2"/></svg></button>
        <div class="tray">
            <svg viewBox="0 0 20 20"><path d="m4 13 6-6 6 6" class="tray-line"/></svg>
            <svg viewBox="0 0 20 20"><path d="M6 4.500h12v9H5M12 14v3M8 17h8M2 3h4v4H2ZM4 7v10" class="tray-line"/></svg>
            <svg viewBox="0 0 20 20"><rect x="7" y="2" width="7" height="11" rx="2" fill="#fff"/><path d="M5 10c0 7 11 7 11 0M10.500 15v3M7 18h7" class="tray-line"/></svg>
            <svg viewBox="0 0 20 20"><path d="M2 8h3l4-4v12l-4-4H2ZM12 7q2 3 0 6M14 5q4 5 0 10M16 3q6 7 0 14" class="tray-line"/></svg>
            <span class="ime">中</span>
            <svg class="q-app" viewBox="0 0 20 20"><rect x="2" y="2" width="16" height="16" rx="3" fill="#2c90f4"/><circle cx="10" cy="9" r="4.500" fill="none" stroke="#fff" stroke-width="2"/><path d="m11 11 4 4" stroke="#fff" stroke-width="2"/></svg>
            <time class="clock"><span>13:18</span><span>2023/9/30</span></time>
            <svg class="notice" viewBox="0 0 20 20"><path d="M2 2h16v13h-6l-3 3v-3H2Z" fill="#fff"/><path d="M5 6h10M5 9h10M5 12h6" stroke="#1a2540"/></svg>
        </div>
        <span class="watermark">UG爱好者论坛@NX小<b>面</b>白</span>
    </footer>

    <form class="dialog">
        <header>
            <svg><use href="#i-gear"/></svg>
            <h2>测量体（即将失效）</h2>
            <button type="reset" aria-label="重置"><svg viewBox="0 0 14 14"><path d="M8 2a5 5 0 1 1-6 5"/><path d="M1 3v4h4"/></svg></button>
            <button type="button" aria-label="关闭"><svg viewBox="0 0 14 14"><path d="m2 2 10 10M12 2 2 12"/></svg></button>
        </header>
        <section class="panel">
            <h3>对象<svg viewBox="0 0 12 10"><path d="m1 9 5-7 5 7"/></svg></h3>
            <div class="pick-row">
                <div class="pick"><svg class="check"><use href="#i-check"/></svg>选择体 (1)</div>
                <button type="button" class="pick-type" aria-label="体"><svg><use href="#i-solid"/></svg></button>
            </div>
        </section>
        <section class="panel associate">
            <h3>关联测量和检查<svg viewBox="0 0 12 10"><path d="m1 9 5-7 5 7"/></svg></h3>
            <label class="check-row"><input type="checkbox">关联</label>
            <div class="field-row">
                <label for="requirement">需求</label>
                <span class="combo disabled"><select id="requirement" disabled><option>无</option></select></span>
            </div>
        </section>
        <div class="expander"><i class="caret"></i></div>
        <div class="actions">
            <button type="button" class="primary">确定</button>
            <button type="button">应用</button>
            <button type="button">取消</button>
        </div>
    </form>
</body>
</html>
```
FILE: styles.css
```css
* {
    box-sizing: border-box;
}

body {
    margin: 0;
    height: 100vh;
    display: flex;
    flex-direction: column;
    position: relative;
    overflow: hidden;
    background: #f0f0f0;
    color: #1a1a1a;
    font-family: "Noto Sans", "Noto Sans CJK SC", sans-serif;
    font-size: 12px;
    line-height: 16px;
}

button,
select,
input {
    font: inherit;
    color: inherit;
    margin: 0;
}

button {
    padding: 0;
    border: 0;
    background: none;
    white-space: nowrap;
}

a {
    color: inherit;
    text-decoration: none;
}

h1,
h2,
h3 {
    margin: 0;
    font-weight: 400;
}

svg {
    display: block;
    flex: none;
    width: 16px;
    height: 16px;
}

.sprite {
    position: absolute;
    width: 0;
    height: 0;
}

.sep {
    width: 1px;
    margin: 0 1px;
    background: #b4b4b4;
    align-self: stretch;
}

.caret {
    flex: none;
    width: 6px;
    height: 3px;
    margin: 0 1px;
    border: 3px solid transparent;
    border-top-color: #1a1a1a;
    border-bottom: 0;
}

.caret.dim {
    border-top-color: #999;
}

.caret.overflow {
    position: relative;
    top: 1px;
}

.caret.overflow::before {
    content: "";
    position: absolute;
    left: -4px;
    top: -6px;
    width: 8px;
    height: 1px;
    background: #1a1a1a;
}

.tool {
    flex: none;
    width: 20px;
    height: 20px;
    display: flex;
    align-items: center;
    justify-content: center;
}

.tool.wide {
    width: 24px;
}

.tool.narrow {
    width: 16px;
}

.tool.with-text {
    width: auto;
    gap: 5px;
    padding-left: 2px;
}

/* title bar */
.title-bar {
    flex: none;
    height: 26px;
    display: flex;
    align-items: center;
    position: relative;
    padding-right: 148px;
}

.quick-access {
    height: 20px;
    display: flex;
    align-items: center;
    gap: 3px;
    font-size: 11px;
}

.logo {
    width: 37px;
    padding-left: 3px;
    font-size: 22px;
    color: #8b9dab;
}

.app-title {
    flex: 1;
    text-align: center;
    font-size: 13px;
    color: #000;
}

.load-strip {
    position: absolute;
    top: 0;
    left: 600px;
    width: 240px;
    height: 1px;
    background: linear-gradient(90deg, #0078d7 20%, #e0e0e0 20%);
}

/* ribbon */
.ribbon-tabs {
    flex: none;
    height: 30px;
    display: flex;
    background: #bdbdbd;
    font-size: 13px;
    line-height: 30px;
}

.ribbon-tabs a {
    padding: 0 13px;
}

.ribbon-tabs .file-tab {
    width: 81px;
    padding: 0;
    margin-right: 2px;
    text-align: center;
    background: #559fb8;
    color: #fff;
}

.ribbon-tabs .active {
    margin-top: 1px;
    line-height: 28px;
    background: #f0f0f0;
    color: #006487;
}

.ribbon {
    flex: none;
    height: 94px;
    display: flex;
    padding: 2px 0 3px;
    border-bottom: 1px solid #c0c0c0;
    font-size: 11px;
}

.ribbon-group {
    display: flex;
    flex-direction: column;
    justify-content: space-between;
    border-right: 1px solid #c4c4c4;
}

.ribbon-items {
    display: flex;
    padding: 0 1px;
}

.ribbon-items.first {
    padding-left: 4px;
}

.ribbon-items.display {
    padding: 0 10px 0 8px;
}

.big,
.more {
    height: 74px;
    display: flex;
    flex-direction: column;
    align-items: center;
}

.big {
    width: 52px;
    padding-top: 4px;
    gap: 5px;
}

.first .big {
    width: 50px;
}

.big svg {
    width: 30px;
    height: 30px;
}

.more {
    width: 40px;
    padding-top: 2px;
    gap: 2px;
}

.more.selected {
    width: 43px;
    background: #b0d6e0;
}

.more .caret {
    margin-top: 4px;
}

.more-box {
    width: 38px;
    height: 35px;
    display: grid;
    place-items: center;
    border: 1px solid #c8c8c8;
    border-radius: 3px;
}

.small-items {
    display: flex;
    flex-direction: column;
    gap: 6px;
    padding: 2px 0 0 7px;
}

.small-items button {
    display: flex;
    align-items: center;
    gap: 4px;
}

.ribbon-group footer {
    display: flex;
    align-items: center;
    padding: 0 7px 0 0;
    color: #006487;
}

.ribbon-group footer span {
    flex: 1;
    text-align: center;
}

/* selection bar */
.selection-bar {
    flex: none;
    height: 48px;
    display: flex;
    align-items: center;
    gap: 5px;
    padding-left: 10px;
    border-bottom: 1px solid #869494;
    font-size: 11px;
    overflow: hidden;
}

.selection-bar .sep {
    margin: 4px 7px 4px 0;
}

.menu-button {
    display: flex;
    align-items: center;
    gap: 4px;
}

.combo {
    position: relative;
    display: block;
    flex: none;
}

.combo::after {
    content: "";
    position: absolute;
    right: 5px;
    top: 50%;
    margin-top: -2px;
    border: 4px solid transparent;
    border-top-color: #1a1a1a;
    border-bottom: 0;
    pointer-events: none;
}

.combo select {
    display: block;
    width: 100%;
    height: 20px;
    padding: 0 2px;
    border: 1px solid #a0a0a0;
    border-radius: 0;
    background: #fff;
    appearance: none;
}

.combo.disabled {
    color: #8a8a8a;
}

.combo.disabled::after {
    border-top-color: #8a8a8a;
}

.combo.disabled select {
    opacity: 1;
    padding-left: 4px;
    border-color: #c0c0c0;
    background: #fafafa;
}

.type-filter {
    width: 133px;
}

.scope {
    width: 140px;
    margin-left: 4px;
}

.body-rule {
    width: 139px;
    margin-left: 2px;
}

/* workspace */
.workspace {
    flex: 1;
    min-height: 0;
    display: flex;
}

.resource-bar {
    flex: none;
    width: 32px;
    display: flex;
    flex-direction: column;
    background: #bdbdbd;
    border-right: 1px solid #a4a4a4;
}

.resource-bar button {
    height: 42px;
    display: flex;
    align-items: center;
    justify-content: center;
    padding-left: 4px;
}

.resource-bar svg {
    width: 24px;
    height: 24px;
}

.resource-bar .settings {
    height: 26px;
    margin-bottom: 16px;
    padding: 0 2px 0 0;
}

.resource-bar .settings svg {
    width: 16px;
    height: 16px;
}

.resource-bar .active {
    margin: 0 -1px 0 2px;
    padding-left: 2px;
    border: 1px solid #9a9a9a;
    border-right: 0;
    background: #f0f0f0;
}

.resource-bar .spaced {
    margin-top: 12px;
}

.navigator {
    flex: none;
    width: 332px;
    display: flex;
    flex-direction: column;
    padding: 0 9px 6px 6px;
    border-right: 1px solid #98a0a4;
}

.navigator-title {
    height: 28px;
    display: flex;
    align-items: center;
    justify-content: space-between;
    padding: 2px 7px 0 4px;
}

.navigator-title h2 {
    font-size: 12px;
}

.maximize {
    width: 12px;
    height: 11px;
    border: 1px solid #1a1a1a;
    border-top-width: 2px;
}

.tree-box {
    flex: 1;
    min-height: 0;
    display: flex;
    flex-direction: column;
    padding: 1px;
    border: 1px solid #b8b8b8;
    background: #fff;
}

.tree-scroll {
    flex: 1;
    min-height: 0;
    overflow: hidden;
}

.tree {
    width: 100%;
    table-layout: fixed;
    border-collapse: separate;
    border-spacing: 0;
}

.col-name {
    width: 200px;
}

.col-latest {
    width: 100px;
}

.tree th {
    height: 21px;
    padding: 0 6px;
    text-align: left;
    font-weight: 400;
    line-height: 20px;
    white-space: nowrap;
    overflow: hidden;
    background: #f0f0f0;
    border-right: 1px solid #d0d0d0;
    border-bottom: 1px solid #d0d0d0;
}

.sort {
    display: inline-block;
    margin: 0 0 2px 14px;
    border: 5px solid transparent;
    border-top: 0;
    border-bottom-color: #1a1a1a;
}

.tree td {
    height: 20px;
    padding: 0;
    background: #fafafa;
    border-right: 1px solid #e0e0e0;
    border-bottom: 1px solid #e4e4e4;
}

.tree tbody tr:nth-child(even) td {
    background: #f4f4f4;
}

.tree th:last-child,
.tree td:last-child {
    border-right: 0;
}

.tree td:nth-child(2) {
    padding-left: 5px;
}

.check {
    width: 14px;
    height: 14px;
}

.node,
.leaf {
    height: 19px;
    display: flex;
    align-items: center;
    white-space: nowrap;
}

.node {
    padding-left: 5px;
    gap: 3px;
}

.node .check {
    margin-left: 2px;
}

.node svg + svg {
    margin-left: -2px;
}

.toggle {
    width: 9px;
    height: 9px;
    margin-right: 2px;
    border: 1px solid #c8c8c8;
    background: #fff;
    color: #000;
    font-size: 10px;
    line-height: 7px;
}

.leaf {
    position: relative;
    margin-left: 28px;
    padding-left: 12px;
    gap: 3px;
}

/* dotted branch lines */
.leaf::before {
    content: "";
    position: absolute;
    left: 0;
    top: -10px;
    width: 10px;
    height: 20px;
    border: 1px dotted #aaa;
    border-width: 0 0 1px 1px;
}

.leaf svg {
    margin-left: -1px;
}

.leaf.muted {
    color: #9c9c9c;
}

.leaf.red {
    color: #ff4a4a;
}

.leaf.current {
    font-weight: 700;
}

.leaf input {
    width: 12px;
    height: 12px;
    border: 1px solid #000;
    appearance: none;
    background: #fff url("data:image/svg+xml,%3Csvg xmlns='http://www.w3.org/2000/svg' viewBox='0 0 10 10'%3E%3Cpath d='M1 5l3 3 5-7' fill='none' stroke='%2312b824' stroke-width='2.4'/%3E%3C/svg%3E");
}

.scrollbar {
    flex: none;
    height: 16px;
    display: flex;
    background: #f0f0f0;
}

.scrollbar button {
    width: 17px;
    display: grid;
    place-items: center;
}

.scrollbar svg {
    width: 8px;
    height: 8px;
    fill: none;
    stroke: #444;
    stroke-width: 2;
}

.track {
    flex: 1;
}

.thumb {
    display: block;
    width: 78%;
    height: 15px;
    background: #cdcdcd;
}

.splitter {
    height: 5px;
    background: #bdbdbd;
    border: 1px solid #a8a8a8;
}

.fold {
    height: 24px;
    display: flex;
    align-items: center;
    justify-content: space-between;
    padding: 4px 5px 0 7px;
    border-bottom: 2px solid #d2d2d2;
    font-size: 14px;
    color: #006487;
}

.fold svg,
.panel h3 svg {
    width: 12px;
    height: 10px;
    fill: none;
    stroke: #006487;
    stroke-width: 2;
}

/* graphics window */
.graphics {
    flex: 1;
    min-width: 0;
    display: flex;
    flex-direction: column;
}

.part-tabs {
    flex: none;
    height: 24px;
    display: flex;
    border-bottom: 2px solid #559fb8;
}

.part-tab {
    height: 22px;
    display: flex;
    align-items: center;
    gap: 5px;
    padding: 0 5px 0 6px;
    background: #559fb8;
    color: #fff;
}

.part-tab svg {
    width: 15px;
    height: 15px;
}

.part-tab .modified,
.part-tab .close {
    width: 12px;
    height: 12px;
    fill: none;
    stroke: #fff;
    stroke-width: 2;
}

.part-tab .close {
    stroke: #b8b8b8;
}

.viewport {
    flex: 1;
    min-height: 0;
    position: relative;
    border: solid #c4c4c4;
    border-width: 0 1px 1px 0;
    background: linear-gradient(#b5b6b8, #d6d7d8 46%, #e6e8ea 74%);
}

.model {
    width: 100%;
    height: 100%;
}

.axis-labels {
    font-size: 12px;
    text-anchor: middle;
}

.measure-readout {
    position: absolute;
    left: 418px;
    top: 230px;
    width: 204px;
    height: 31px;
    display: flex;
    align-items: center;
    gap: 3px;
    padding-left: 4px;
    background: #f0f0f0;
    border: 1px solid #a8a8a8;
    white-space: nowrap;
}

.measure-readout .combo {
    width: 75px;
    margin-left: 3px;
}

.measure-readout select {
    height: 23px;
    padding-left: 4px;
}

.grip {
    width: 6px;
    height: 23px;
    background: radial-gradient(circle, #aaa 1px, transparent 1px) 0 0 / 4px 4px;
}

/* status bar */
.status-bar {
    flex: none;
    height: 22px;
    display: flex;
    align-items: center;
    gap: 4px;
    padding: 0 55px 2px 3px;
    border-top: 1px solid #a8a8a8;
    font-size: 11px;
    color: #000;
}

.cue {
    flex: 11;
}

.status {
    flex: 12;
    margin-left: 25px;
}

/* taskbar */
.taskbar {
    flex: none;
    height: 40px;
    display: flex;
    position: relative;
    background: linear-gradient(90deg, #243840, #223640 45%, #1a2642 85%, #1a2642);
    color: #fff;
}

.taskbar > button {
    width: 48px;
    display: grid;
    place-items: center;
    position: relative;
}

.taskbar .app {
    width: 49px;
}

.taskbar button:nth-child(2) {
    margin-right: 2px;
}

.taskbar button svg {
    width: 24px;
    height: 24px;
}

.taskbar .open::after {
    content: "";
    position: absolute;
    left: 5px;
    right: 4px;
    bottom: 0;
    height: 2px;
    background: #76b9ed;
}

.taskbar .current {
    background: #4d6068;
}

.taskbar .current::after {
    left: 0;
    right: 0;
}

.nx-icon {
    width: 22px;
    height: 22px;
    background: #8c1410;
    box-shadow: -2px 2px #109890;
    font-size: 11px;
    font-weight: 700;
    line-height: 24px;
}

.tray {
    margin-left: auto;
    display: flex;
    align-items: center;
    gap: 4px;
    padding-right: 23px;
}

.tray svg {
    width: 20px;
    height: 20px;
}

.tray-line {
    fill: none;
    stroke: #fff;
    stroke-width: 1.3;
}

.ime {
    width: 20px;
    text-align: center;
    font-size: 13px;
}

.tray .q-app {
    margin-left: 4px;
}

.clock {
    width: 62px;
    margin: 0 11px 0 10px;
    display: flex;
    flex-direction: column;
    align-items: center;
    line-height: 19px;
}

.watermark {
    position: absolute;
    right: 2px;
    bottom: 2px;
    font-family: "Liberation Mono", "Noto Sans CJK SC", monospace;
    font-size: 15px;
    font-weight: 300;
    line-height: 20px;
    color: #c8ccd4;
}

.watermark b {
    font-weight: 300;
    border-radius: 50%;
    background: #80848ccc;
}

/* measure dialog */
.dialog {
    position: absolute;
    top: 0;
    right: 0;
    width: 328px;
    height: 250px;
    padding: 0 5px;
    border: 1px solid #a4a4a4;
    border-top: 0;
    background: #dcdcdc;
}

.dialog header {
    height: 24px;
    display: flex;
    align-items: center;
    gap: 7px;
    margin: 0 -6px 4px;
    padding: 0 9px 0 6px;
    background: #559fb8;
    color: #fff;
}

.dialog header h2 {
    flex: 1;
    font-size: 13px;
}

.dialog header button svg {
    width: 14px;
    height: 14px;
    fill: none;
    stroke: #fff;
    stroke-width: 2;
}

.panel {
    margin-bottom: 3px;
    padding: 4px 9px 8px;
    background: #f0f0f0;
    border-bottom: 2px solid #929292;
}

.panel h3 {
    display: flex;
    align-items: center;
    justify-content: space-between;
    margin: 0 -3px 8px -2px;
    font-size: 14px;
    line-height: 18px;
    color: #006487;
}

.panel.associate {
    padding-bottom: 7px;
}

.associate h3 {
    margin-bottom: 10px;
}

.pick-row {
    display: flex;
    gap: 2px;
}

.pick {
    flex: 1;
    height: 32px;
    display: flex;
    align-items: center;
    gap: 4px;
    padding-left: 2px;
    background: #ffe077;
}

.pick-type {
    width: 32px;
    display: grid;
    place-items: center;
    background: #ffe077;
}

.pick-type svg {
    width: 24px;
    height: 24px;
}

.check-row {
    display: flex;
    align-items: center;
    gap: 5px;
    margin-bottom: 4px;
}

.check-row input {
    width: 13px;
    height: 13px;
    border: 1px solid #1a1a1a;
    background: #fff;
    appearance: none;
}

.field-row {
    display: flex;
    align-items: center;
    justify-content: space-between;
    color: #8a8a8a;
}

.field-row .combo {
    width: 141px;
}

.field-row select {
    height: 25px;
}

.expander {
    height: 13px;
    display: flex;
    align-items: center;
    justify-content: center;
    border-bottom: 1px solid #cfcfcf;
}

.expander .caret {
    width: 10px;
    height: 5px;
    border-width: 5px 5px 0;
}

.actions {
    display: flex;
    justify-content: flex-end;
    gap: 5px;
    padding: 9px 10px 0 0;
}

.actions button {
    width: 54px;
    height: 25px;
    border: 1px solid #929292;
}

.actions .primary {
    border-color: #74b2c8;
    background: #74b2c8;
    color: #fff;
}
```
